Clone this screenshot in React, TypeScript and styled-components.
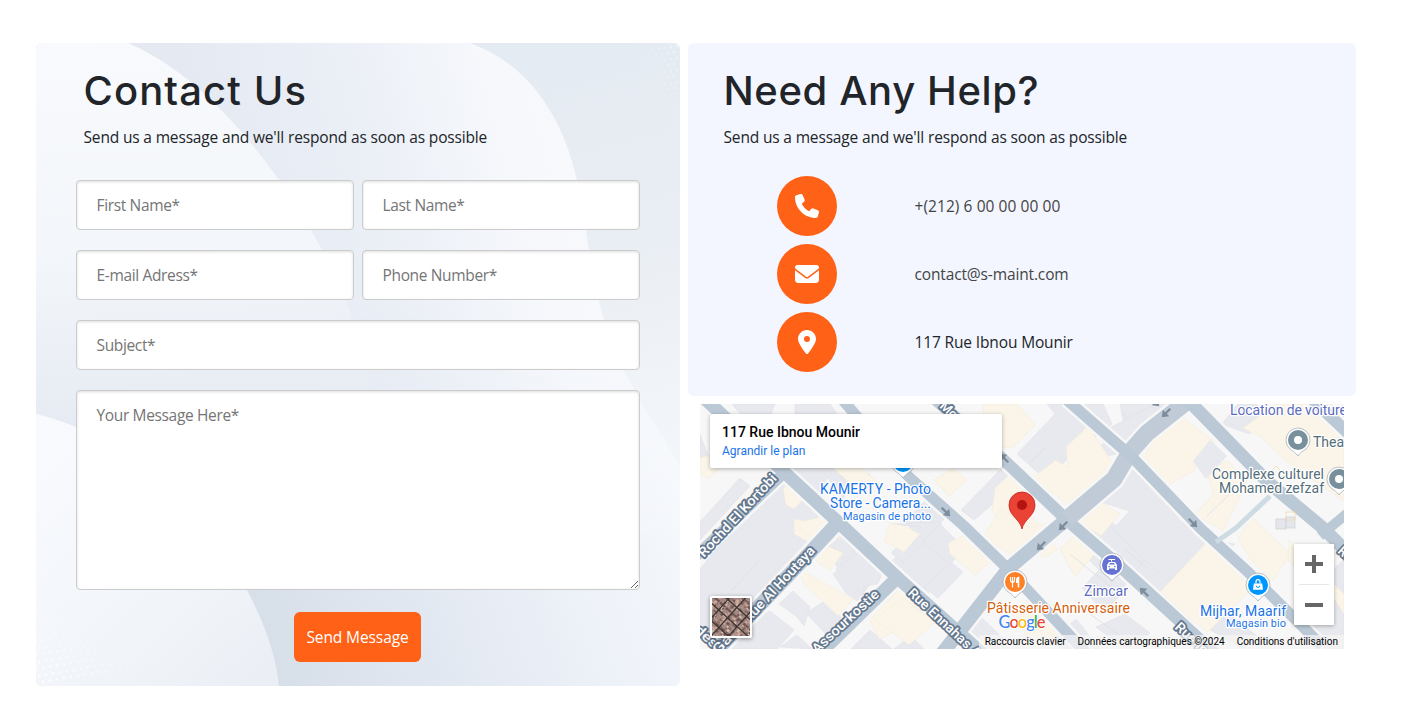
import React from "react";
import styled, { createGlobalStyle } from "styled-components";
import { FaPhone, FaEnvelope, FaLocationDot } from "react-icons/fa6";

const GlobalStyle = createGlobalStyle`
  * { box-sizing: border-box; }
  body { margin: 0; background: #fff; color: #212529; font: 400 16px/24px "Open Sans", "Noto Sans", sans-serif; }
`;

const Page = styled.main`
  display: flex;
  gap: 8px;
  align-items: flex-start;
  padding: 43px 53px 0 36px;
`;

const FormPanel = styled.section`
  position: relative;
  flex: none;
  width: 644px;
  height: 643px;
  padding: 23px 40px 24px;
  border-radius: 6px;
  overflow: hidden;
`;

const Backdrop = styled.svg`
  position: absolute;
  inset: 0;
  width: 644px;
  height: 643px;
`;

const Heading = styled.header<{ $inset: number }>`
  position: relative;
  padding-left: ${(p) => p.$inset}px;
`;

const Title = styled.h1<{ $tracking: string }>`
  margin: 0 0 4px;
  font: 500 40px/50px Inter, sans-serif;
  letter-spacing: ${(p) => p.$tracking};
  white-space: nowrap;
`;

const Lead = styled.p`
  margin: 0;
  padding-top: 5px;
  font-size: 15.5px;
  letter-spacing: -0.16px;
  white-space: nowrap;
`;

const Form = styled.form`
  position: relative;
  display: grid;
  grid-template-columns: 1fr 1fr;
  gap: 20px 8px;
  margin-top: 31px;
`;

const Field = styled.input<{ $wide?: boolean }>`
  grid-column: ${(p) => (p.$wide ? "1 / -1" : "auto")};
  width: 100%;
  height: 50px;
  padding: 0 19.5px;
  border: 1px solid #ccc;
  border-radius: 4px;
  background: #fff;
  box-shadow: inset 0 1px 3px #ddd;
  font: 400 15.5px "Open Sans", sans-serif;
  letter-spacing: -0.35px;
  &::placeholder { color: #757575; }
`;

const Message = styled.textarea`
  display: block;
  grid-column: 1 / -1;
  width: 100%;
  height: 200px;
  padding: 12px 19.5px;
  border: 1px solid #ccc;
  border-radius: 4px;
  background: #fff;
  box-shadow: inset 0 1px 3px #ddd;
  font: 400 15.5px/24px "Open Sans", sans-serif;
  letter-spacing: -0.35px;
  &::placeholder { color: #757575; }
`;

const Submit = styled.button`
  grid-column: 1 / -1;
  justify-self: center;
  width: 127px;
  height: 50px;
  margin: 2px 1px 0 0;
  padding: 0;
  border: 0;
  border-radius: 6px;
  background: #ff6116;
  color: #fff;
  font: 400 15.5px "Open Sans", sans-serif;
  letter-spacing: -0.1px;
`;

const HelpColumn = styled.div`
  width: 668px;
  display: flex;
  flex-direction: column;
  gap: 8px;
`;

const HelpPanel = styled.section`
  height: 353px;
  padding: 23px 36px 0 35px;
  border-radius: 6px;
  background: #f3f6ff;
`;

const ContactList = styled.ul`
  display: flex;
  flex-direction: column;
  gap: 8px;
  margin: 27px 0 0;
  padding: 0 0 0 54px;
  list-style: none;
`;

const ContactRow = styled.li<{ $muted?: boolean; $tracking?: string }>`
  display: flex;
  align-items: center;
  gap: 77.5px;
  font-size: 15.5px;
  letter-spacing: ${(p) => p.$tracking ?? "-0.14px"};
  color: ${(p) => (p.$muted ? "#444" : "#212529")};
`;

const Badge = styled.span`
  display: grid;
  place-items: center;
  width: 60px;
  height: 60px;
  border-radius: 50%;
  background: #ff6116;
  color: #fff;
  font-size: 24px;
`;

const MapFrame = styled.section`
  position: relative;
  width: 644px;
  height: 245px;
  margin-left: 12px;
  overflow: hidden;
  font-family: Roboto, sans-serif;
`;

const MapSvg = styled.svg`
  display: block;
  font-family: Roboto, sans-serif;
`;

const PlaceCard = styled.div`
  position: absolute;
  left: 10px;
  top: 10px;
  width: 292px;
  height: 54px;
  padding: 10px 12px;
  border-radius: 2px;
  background: #fff;
  box-shadow: 0 1px 4px rgba(0, 0, 0, 0.3);
`;

const PlaceName = styled.div`
  font: 500 14px/16px Roboto, sans-serif;
  color: #000;
`;

const PlaceLink = styled.a`
  display: block;
  margin-top: 4px;
  font: 400 12px/14px Roboto, sans-serif;
  color: #1a73e8;
`;

const ZoomControl = styled.div`
  position: absolute;
  right: 10px;
  bottom: 24px;
  width: 40px;
  height: 81px;
  background: #fff;
  box-shadow: 0 1px 4px rgba(0, 0, 0, 0.3);
  svg { display: block; }
`;

const SatelliteToggle = styled.div`
  position: absolute;
  left: 10px;
  bottom: 11px;
  width: 42px;
  height: 42px;
  border: 2px solid #fff;
  border-radius: 2px;
  box-shadow: 0 1px 4px rgba(0, 0, 0, 0.4);
  overflow: hidden;
  svg { display: block; }
`;

const Attribution = styled.div`
  position: absolute;
  right: 0;
  bottom: 0;
  display: flex;
  gap: 12px;
  height: 14px;
  padding: 0 6px;
  background: rgba(245, 245, 245, 0.72);
  font: 400 10px/14px Roboto, sans-serif;
  color: #000;
  white-space: nowrap;
`;

const range = (n: number) => Array.from({ length: n }, (_, i) => i);

function Waves() {
  return (
    <Backdrop viewBox="0 0 644 643" aria-hidden="true">
      <defs>
        <linearGradient id="wbase" x1="0" y1="0" x2="0.25" y2="1">
          <stop offset="0" stopColor="#e2e9f1" />
          <stop offset="0.45" stopColor="#e8edf3" />
          <stop offset="0.8" stopColor="#f2f5f9" />
        </linearGradient>
        <linearGradient id="wmid" x1="200" y1="230" x2="580" y2="130" gradientUnits="userSpaceOnUse">
          <stop offset="0" stopColor="#e5e9f2" />
          <stop offset="0.4" stopColor="#ebeff6" />
          <stop offset="0.75" stopColor="#f6f8fc" />
          <stop offset="1" stopColor="#f8f9fd" />
        </linearGradient>
        <linearGradient id="wlow" x1="230" y1="600" x2="644" y2="450" gradientUnits="userSpaceOnUse">
          <stop offset="0" stopColor="#d7dfe9" />
          <stop offset="0.35" stopColor="#e2e8f1" />
          <stop offset="0.7" stopColor="#edf1f8" />
          <stop offset="1" stopColor="#f5f8fc" />
        </linearGradient>
        <linearGradient id="wfade" x1="0" y1="270" x2="0" y2="500" gradientUnits="userSpaceOnUse">
          <stop offset="0" stopColor="#fff" stopOpacity="0" />
          <stop offset="1" stopColor="#fff" />
        </linearGradient>
        <mask id="wmask"><rect width="644" height="643" fill="url(#wfade)" /></mask>
        <linearGradient id="wleft" x1="40" y1="0" x2="60" y2="385" gradientUnits="userSpaceOnUse">
          <stop offset="0" stopColor="#f8fafd" />
          <stop offset="0.55" stopColor="#f3f6fa" />
          <stop offset="1" stopColor="#e6ebf3" />
        </linearGradient>
        <linearGradient id="wcorner" x1="0" y1="400" x2="220" y2="643" gradientUnits="userSpaceOnUse">
          <stop offset="0" stopColor="#f8fafe" />
          <stop offset="0.5" stopColor="#f3f6fa" />
          <stop offset="1" stopColor="#ebeff5" />
        </linearGradient>
      </defs>
      <rect width="644" height="643" fill="url(#wbase)" />
      <path d="M0 0H434C492 21 526 72 541 137C551 180 552 218 566 270C582 328 614 374 644 422V643H0Z" fill="url(#wmid)" />
      <path d="M0 0H434C492 21 526 72 541 137C551 180 552 218 566 270C582 328 614 374 644 422V643H0Z" fill="url(#wlow)" mask="url(#wmask)" />
      <path d="M0 0H92C147 24 196 71 243 137C281 193 302 233 317 277C328 309 333 328 337 350V400H0Z" fill="url(#wleft)" />
      <path d="M0 371C88 392 166 461 211 547C232 587 240 615 243 643H0Z" fill="url(#wcorner)" />
      <g fill="#fff">
        {range(13).flatMap((r) => range(16).map((c) => {
          const x = c * 7 + (r % 2) * 3;
          const y = 640 - r * 7 - c * 1.2;
          return x / 110 + r / 13 < 1.2 ? (
            <circle key={`b${r}-${c}`} cx={x} cy={y} r={1.4} opacity={Math.max(0.1, 0.85 - x / 150 - r / 18)} />
          ) : null;
        }))}
        {range(15).flatMap((r) => range(7).map((c) => {
          const x = 641 - c * 6 - (r % 2) * 3;
          const y = 3 + r * 6 + c;
          return c / 7 + r / 15 < 1 ? (
            <circle key={`t${r}-${c}`} cx={x} cy={y} r={0.9} opacity={Math.max(0.1, 0.7 - c / 9 - r / 24)} />
          ) : null;
        }))}
      </g>
    </Backdrop>
  );
}

const greyBlocks = [
  "0,30 12,62 0,66", "32,0 75,0 70,12 42,12", "95,0 130,0 140,14 95,14",
  "80,64 133,64 118,90 86,72",
  "0,118 40,74 50,82 0,136", "0,165 60,92 82,76 118,112 112,125 92,170 80,177 20,237 8,236 0,228",
  "120,64 155,64 150,84 143,94", "140,70 170,70 150,88",
  "146,130 158,153 142,173 127,143", "133,170 160,147 180,168 157,197 145,188",
  "205,118 228,94 246,113 223,138", "181,170 221,123 190,120 240,118 248,132 234,152",
  "140,130 152,126 163,140 145,155 133,143", "136,165 162,145 185,160 178,180 164,182 164,192",
  "79,200 93,187 110,203 104,222 96,212", "106,209 123,198 141,213 126,230",
  "50,218 70,207 94,226 77,245 30,245", "80,243 97,231 112,245",
  "151,245 170,226 192,245", "194,245 211,232 224,245",
  "191,149 214,128 238,147 217,168", "200,162 226,136 252,164 225,192", "224,183 251,158 263,168 238,194",
  "261,106 304,62 319,78 274,116", "222,138 240,120 265,145 250,160",
  "317,50 355,10 347,0 403,0 412,20 370,53 345,75", "420,0 470,0 454,29 424,22",
  "385,55 430,16 423,10 446,34 425,49",
  "415,65 439,39 430,78 410,97", "455,0 470,0 428,50 404,27",
  "425,145 457,125 490,168 448,200", "374,140 406,113 448,150 420,188", "382,184 400,165 422,188 405,209",
  "430,63 456,88 481,117 504,136 535,140 510,158 467,176 439,151 413,125 430,107 404,99",
  "522,20 538,0 556,0 571,14 549,30",
  "609,0 630,0 644,13 644,30", "602,197 644,155 644,245 625,245",
  "260,224 275,207 308,239 302,245 281,245", "353,235 376,215 400,245 361,245",
  "396,223 425,210 450,229 426,245", "500,220 519,203 557,232 543,245",
];
const creamBlocks = [
  "0,54 14,50 20,64 8,75 0,70", "133,64 160,64 180,80 160,88",
  "83,85 92,73 108,90 94,105 86,101", "94,115 117,119 112,137 140,130 121,145 94,130",
  "93,120 125,112 140,134 116,136", "98,166 108,170 153,195 138,212 104,180",
  "116,142 124,141 143,149 130,166 117,158", "190,119 203,122 220,130 204,148 184,137",
  "234,76 253,64 267,76 249,92",
  "170,216 204,180 222,194 200,225 179,235", "203,194 235,218 209,241 174,215",
  "295,84 309,71 325,85 317,96 338,120 357,145 345,154 317,137 292,107",
  "283,133 300,105 330,124 350,118 350,132 320,156",
  "248,139 263,132 293,155 275,171 250,150",
  "331,75 356,56 368,64 366,43 388,22 414,61 373,104 356,91",
  "283,0 317,0 335,21 313,44 302,43 283,27",
  "443,56 462,20 480,12 515,38 497,57 494,67 468,81",
  "506,66 528,57 547,78 523,127 495,110 514,90", "543,24 576,0 620,0 644,23 644,97 586,57 561,33",
  "374,114 394,94 420,110 401,132", "360,145 375,130 397,147 375,173",
  "460,188 507,138 559,178 508,228 494,218",
  "538,135 552,113 590,150 573,177 552,157", "589,136 644,190 644,210 622,177 588,157",
  "315,210 333,191 368,220 345,243 326,232",
];

const roads: Array<[string, number, string?]> = [
  ["M5 -5L82 66L138 118L200 176L285 252", 13],
  ["M84 69L-8 156", 11],
  ["M142 114L104 155L18 245", 14],
  ["M199 172L115 254", 13],
  ["M141 -6L209 73L264 122L308 165L387 250", 11],
  ["M235 -5L306 58L369 118L414 157L520 254", 12],
  ["M367 115L309 164L241 251", 14],
  ["M490 -5L447 29L430 48L414 75L367 115", 17, "#c1cbd7"],
  ["M367 -4L431 52L500 124L548 168L622 242", 11],
  ["M487 -5L569 79L623 124L650 151", 13],
  ["M650 107L620 132", 10],
  ["M612 -5L650 31", 12],
  ["M570 92L536 124L516 138", 5, "#cddbe2"],
];

interface LabelProps { x: number; y: number; size?: number; fill?: string; width?: number; anchor?: "start" | "middle" | "end"; children: React.ReactNode }
const Label = ({ x, y, size = 14, fill = "#1a73e8", width, anchor = "start", children }: LabelProps) => (
  <text x={x} y={y} fontSize={size} fill={fill} textAnchor={anchor} textLength={width} stroke="#fff" strokeWidth="2.5" paintOrder="stroke" strokeLinejoin="round">{children}</text>
);

const Street = ({ x, y, angle, width, children }: { x: number; y: number; angle: number; width: number; children: string }) => (
  <text transform={`translate(${x} ${y}) rotate(${angle})`} fontSize="13.5" fontWeight="500" fill="#fff" textLength={width} lengthAdjust="spacingAndGlyphs" stroke="#64788f" strokeWidth="3.6" paintOrder="stroke" strokeLinejoin="round">{children}</text>
);

const Poi = ({ x, y, color, children }: { x: number; y: number; color: string; children?: React.ReactNode }) => (
  <g transform={`translate(${x} ${y})`}>
    <path d="M0 16C-2 13-5 11-8 9A12 12 0 1 1 8 9C5 11 2 13 0 16Z" fill="#fff" stroke="#9aa6b2" strokeWidth="0.7" />
    <circle r="10" fill={color} />
    {children}
  </g>
);

const Arrow = ({ x, y, angle }: { x: number; y: number; angle: number }) => (
  <path transform={`translate(${x} ${y}) rotate(${angle})`} d="M-6 -1.2H0V-4.5L6 0L0 4.5V1.2H-6Z" fill="#7e8d9b" />
);

function StreetMap() {
  return (
    <MapSvg width="644" height="245" viewBox="0 0 644 245">
      <rect width="644" height="245" fill="#f7f7f7" />
      <g fill="#e8e9ee" stroke="#dedfe6" strokeWidth="0.5">
        {greyBlocks.map((p, i) => <polygon key={i} points={p} />)}
      </g>
      <g fill="#faf5e8" stroke="#f0ead9" strokeWidth="0.5">
        {creamBlocks.map((p, i) => <polygon key={i} points={p} />)}
      </g>
      <polygon points="493,57 510,36 527,52 506,75" fill="#e8e9ee" />
      <g stroke="#dcdee4" strokeWidth="0.8" fill="none">
        <path d="M31 187L58 158M331 58L347 42M475 245L493 225M425 145L448 165M390 210L430 239M371 151L411 183M507 112L548 72" />
      </g>
      <g fill="none" strokeLinejoin="round">
        {roads.map(([d, w], i) => <path key={`edge${i}`} d={d} strokeWidth={w + 5} stroke="#f7f7f7" />)}
        {roads.map(([d, w, color], i) => <path key={i} d={d} strokeWidth={w} stroke={color ?? "#bbc9d6"} />)}
      </g>
      <g fill="#e4e6eb" stroke="#ccd0d6" strokeWidth="0.7">
        <rect x="576" y="115" width="10" height="10" /><rect x="586" y="113" width="9" height="11" />
        <path d="M586 108h9v8h-9z" fill="none" stroke="#f3d7a5" />
        <path d="M569 69L576 62L581 67" fill="none" stroke="#f3d7a5" />
      </g>
      <Arrow x={466} y={9} angle={135} /><Arrow x={493} y={119} angle={45} />
      <Arrow x={246} y={108} angle={45} /><Arrow x={363} y={122} angle={135} />
      <Arrow x={341} y={142} angle={135} /><Arrow x={304} y={54} angle={-135} />
      <Arrow x={444} y={188} angle={-135} /><Arrow x={455} y={-2} angle={45} />

      <Street x={4} y={154} angle={-47} width={108}>Rochd El Kortobi</Street>
      <Street x={49} y={219} angle={-47} width={98}>Rue Al Houtaya</Street>
      <Street x={117} y={250} angle={-43} width={86}>Assourkostie</Street>
      <Street x={207} y={190} angle={43} width={94}>Rue Ennahas A</Street>
      <Street x={239} y={3} angle={43} width={26}>Mou</Street>
      <Street x={474} y={224} angle={43} width={40}>Rue In</Street>
      <Street x={-6} y={227} angle={43} width={26}>des</Street>
      <Street x={18} y={251} angle={-47} width={26}>Gal</Street>
      <Street x={637} y={148} angle={43} width={22}>Rue</Street>

      <Poi x={203} y={58} color="#0096ff" />
      <Label x={231} y={90} width={111} anchor="end">KAMERTY - Photo</Label>
      <Label x={231} y={104} width={101} anchor="end">Store - Camera...</Label>
      <Label x={231} y={116} size={11} width={88} anchor="end">Magasin de photo</Label>
      <Label x={530} y={11} width={124} fill="#5c6bc0">Location de voitures</Label>
      <Poi x={598} y={36} color="#78909c"><circle r="4" fill="#fff" /></Poi>
      <Label x={613} y={43} fill="#546e7a">Theatre</Label>
      <Poi x={639} y={75} color="#78909c"><circle r="4" fill="#fff" /></Poi>
      <Label x={624} y={75} width={112} anchor="end" fill="#546e7a">Complexe culturel</Label>
      <Label x={624} y={89} width={105} anchor="end" fill="#546e7a">Mohamed zefzaf</Label>

      <Poi x={412} y={161} color="#6673d2">
        <path d="M-5 5V0L-3 -3H3L5 0V5H3V3.5H-3V5ZM-3.5 -6H3V-5H0V-3.5H-1V-5H-3.5Z" fill="#fff" />
        <path d="M-3 -0.5L-2 -2H2L3 -0.5Z" fill="#6673d2" /><circle cx="-2.8" cy="1.6" r="0.8" fill="#6673d2" /><circle cx="2.8" cy="1.6" r="0.8" fill="#6673d2" />
      </Poi>
      <Label x={384} y={192} width={44} fill="#5c6bc0">Zimcar</Label>
      <Poi x={315} y={178} color="#ff8126">
        <path d="M-4.5 -5V-1.5Q-4.5 0-2.5 .5V5.5M-2.5 -5V0M-.5 -5V-1.5Q-.5 0-2.5 .5" fill="none" stroke="#fff" strokeWidth="1.2" />
        <path d="M4.3 -5.5V5.5H2.7V1H1V-2C1-4 2.3-5.2 4.3-5.5Z" fill="#fff" />
      </Poi>
      <Label x={287} y={209} width={143} fill="#d5600c">Pâtisserie Anniversaire</Label>
      <Poi x={558} y={181} color="#0096ff">
        <path d="M-4.2 -1.5H4.2L5 4.8H-5Z" fill="#fff" /><path d="M-2 -1.5V-3.3A2 2 0 0 1 2 -3.3V-1.5" fill="none" stroke="#fff" strokeWidth="1.2" />
        <path d="M-1.8 .6A1.8 1.8 0 0 0 1.8 .6" fill="none" stroke="#0096ff" strokeWidth="1" />
      </Poi>
      <Label x={586} y={212} width={86} anchor="end">Mijhar, Maarif</Label>
      <Label x={586} y={223} size={11} width={60} anchor="end">Magasin bio</Label>

      <path d="M322 125C320 115 309 112 309 101A13 13 0 0 1 335 101C335 112 324 115 322 125Z" fill="#ea4335" stroke="#c5221f" strokeWidth="0.8" />
      <circle cx="322" cy="101" r="5" fill="#b31412" />

      <text x="298.5" y="223.5" fontSize="16.5" fontFamily="Lato, sans-serif" fontWeight="500" textLength="47" stroke="#fff" strokeWidth="1.6" paintOrder="stroke">
        <tspan fill="#4285f4">G</tspan><tspan fill="#ea4335">o</tspan><tspan fill="#fbbc04">o</tspan><tspan fill="#4285f4">g</tspan><tspan fill="#34a853">l</tspan><tspan fill="#ea4335">e</tspan>
      </text>
    </MapSvg>
  );
}

const roofTones = ["#a5877f", "#cfab9f", "#886964", "#b39790", "#dac2ae", "#6d5552", "#a08a85"];

function Satellite() {
  return (
    <svg width="38" height="38" viewBox="0 0 38 38">
      <rect width="38" height="38" fill="#a38780" />
      <g transform="rotate(42 19 19)">
        {range(22).flatMap((r) => range(22).map((c) => (
          <rect key={`${r}-${c}`} x={c * 2.6 - 9} y={r * 2.6 - 9} width={1.5 + ((r * 3 + c) % 3)} height={1.2 + ((r + c * 5) % 3) * 0.7} fill={roofTones[(r * r * 3 + c * 5 + r * c) % 7]} />
        )))}
        <path d="M-10 8H50M-10 22H50M-10 35H50M5 -10V50M17 -10V50M30 -10V50" stroke="#3d3533" strokeWidth="1.3" />
      </g>
    </svg>
  );
}

export default function App() {
  return (
    <>
      <GlobalStyle />
      <Page>
        <FormPanel>
          <Waves />
          <Heading $inset={7.5}>
            <Title $tracking="1.1px">Contact Us</Title>
            <Lead>Send us a message and we'll respond as soon as possible</Lead>
          </Heading>
          <Form>
            <Field placeholder="First Name*" />
            <Field placeholder="Last Name*" />
            <Field placeholder="E-mail Adress*" />
            <Field placeholder="Phone Number*" />
            <Field $wide placeholder="Subject*" />
            <Message placeholder="Your Message Here*" />
            <Submit type="button">Send Message</Submit>
          </Form>
        </FormPanel>
        <HelpColumn>
          <HelpPanel>
            <Heading $inset={0.5}>
              <Title $tracking="0.6px">Need Any Help?</Title>
              <Lead>Send us a message and we'll respond as soon as possible</Lead>
            </Heading>
            <ContactList>
              <ContactRow $muted $tracking="0.07px"><Badge><FaPhone /></Badge>+(212) 6 00 00 00 00</ContactRow>
              <ContactRow $muted><Badge><FaEnvelope /></Badge>contact@s-maint.com</ContactRow>
              <ContactRow><Badge><FaLocationDot /></Badge>117 Rue Ibnou Mounir</ContactRow>
            </ContactList>
          </HelpPanel>
          <MapFrame>
            <StreetMap />
            <PlaceCard>
              <PlaceName>117 Rue Ibnou Mounir</PlaceName>
              <PlaceLink>Agrandir le plan</PlaceLink>
            </PlaceCard>
            <SatelliteToggle><Satellite /></SatelliteToggle>
            <ZoomControl>
              <svg width="40" height="81" viewBox="0 0 40 81">
                <path d="M11 20H29M20 11V29M11 61H29" stroke="#666" strokeWidth="4" />
                <path d="M5 40.5H35" stroke="#e6e6e6" />
              </svg>
            </ZoomControl>
            <Attribution>
              <span>Raccourcis clavier</span>
              <span>Données cartographiques ©2024</span>
              <span>Conditions d'utilisation</span>
            </Attribution>
          </MapFrame>
        </HelpColumn>
      </Page>
    </>
  );
}
